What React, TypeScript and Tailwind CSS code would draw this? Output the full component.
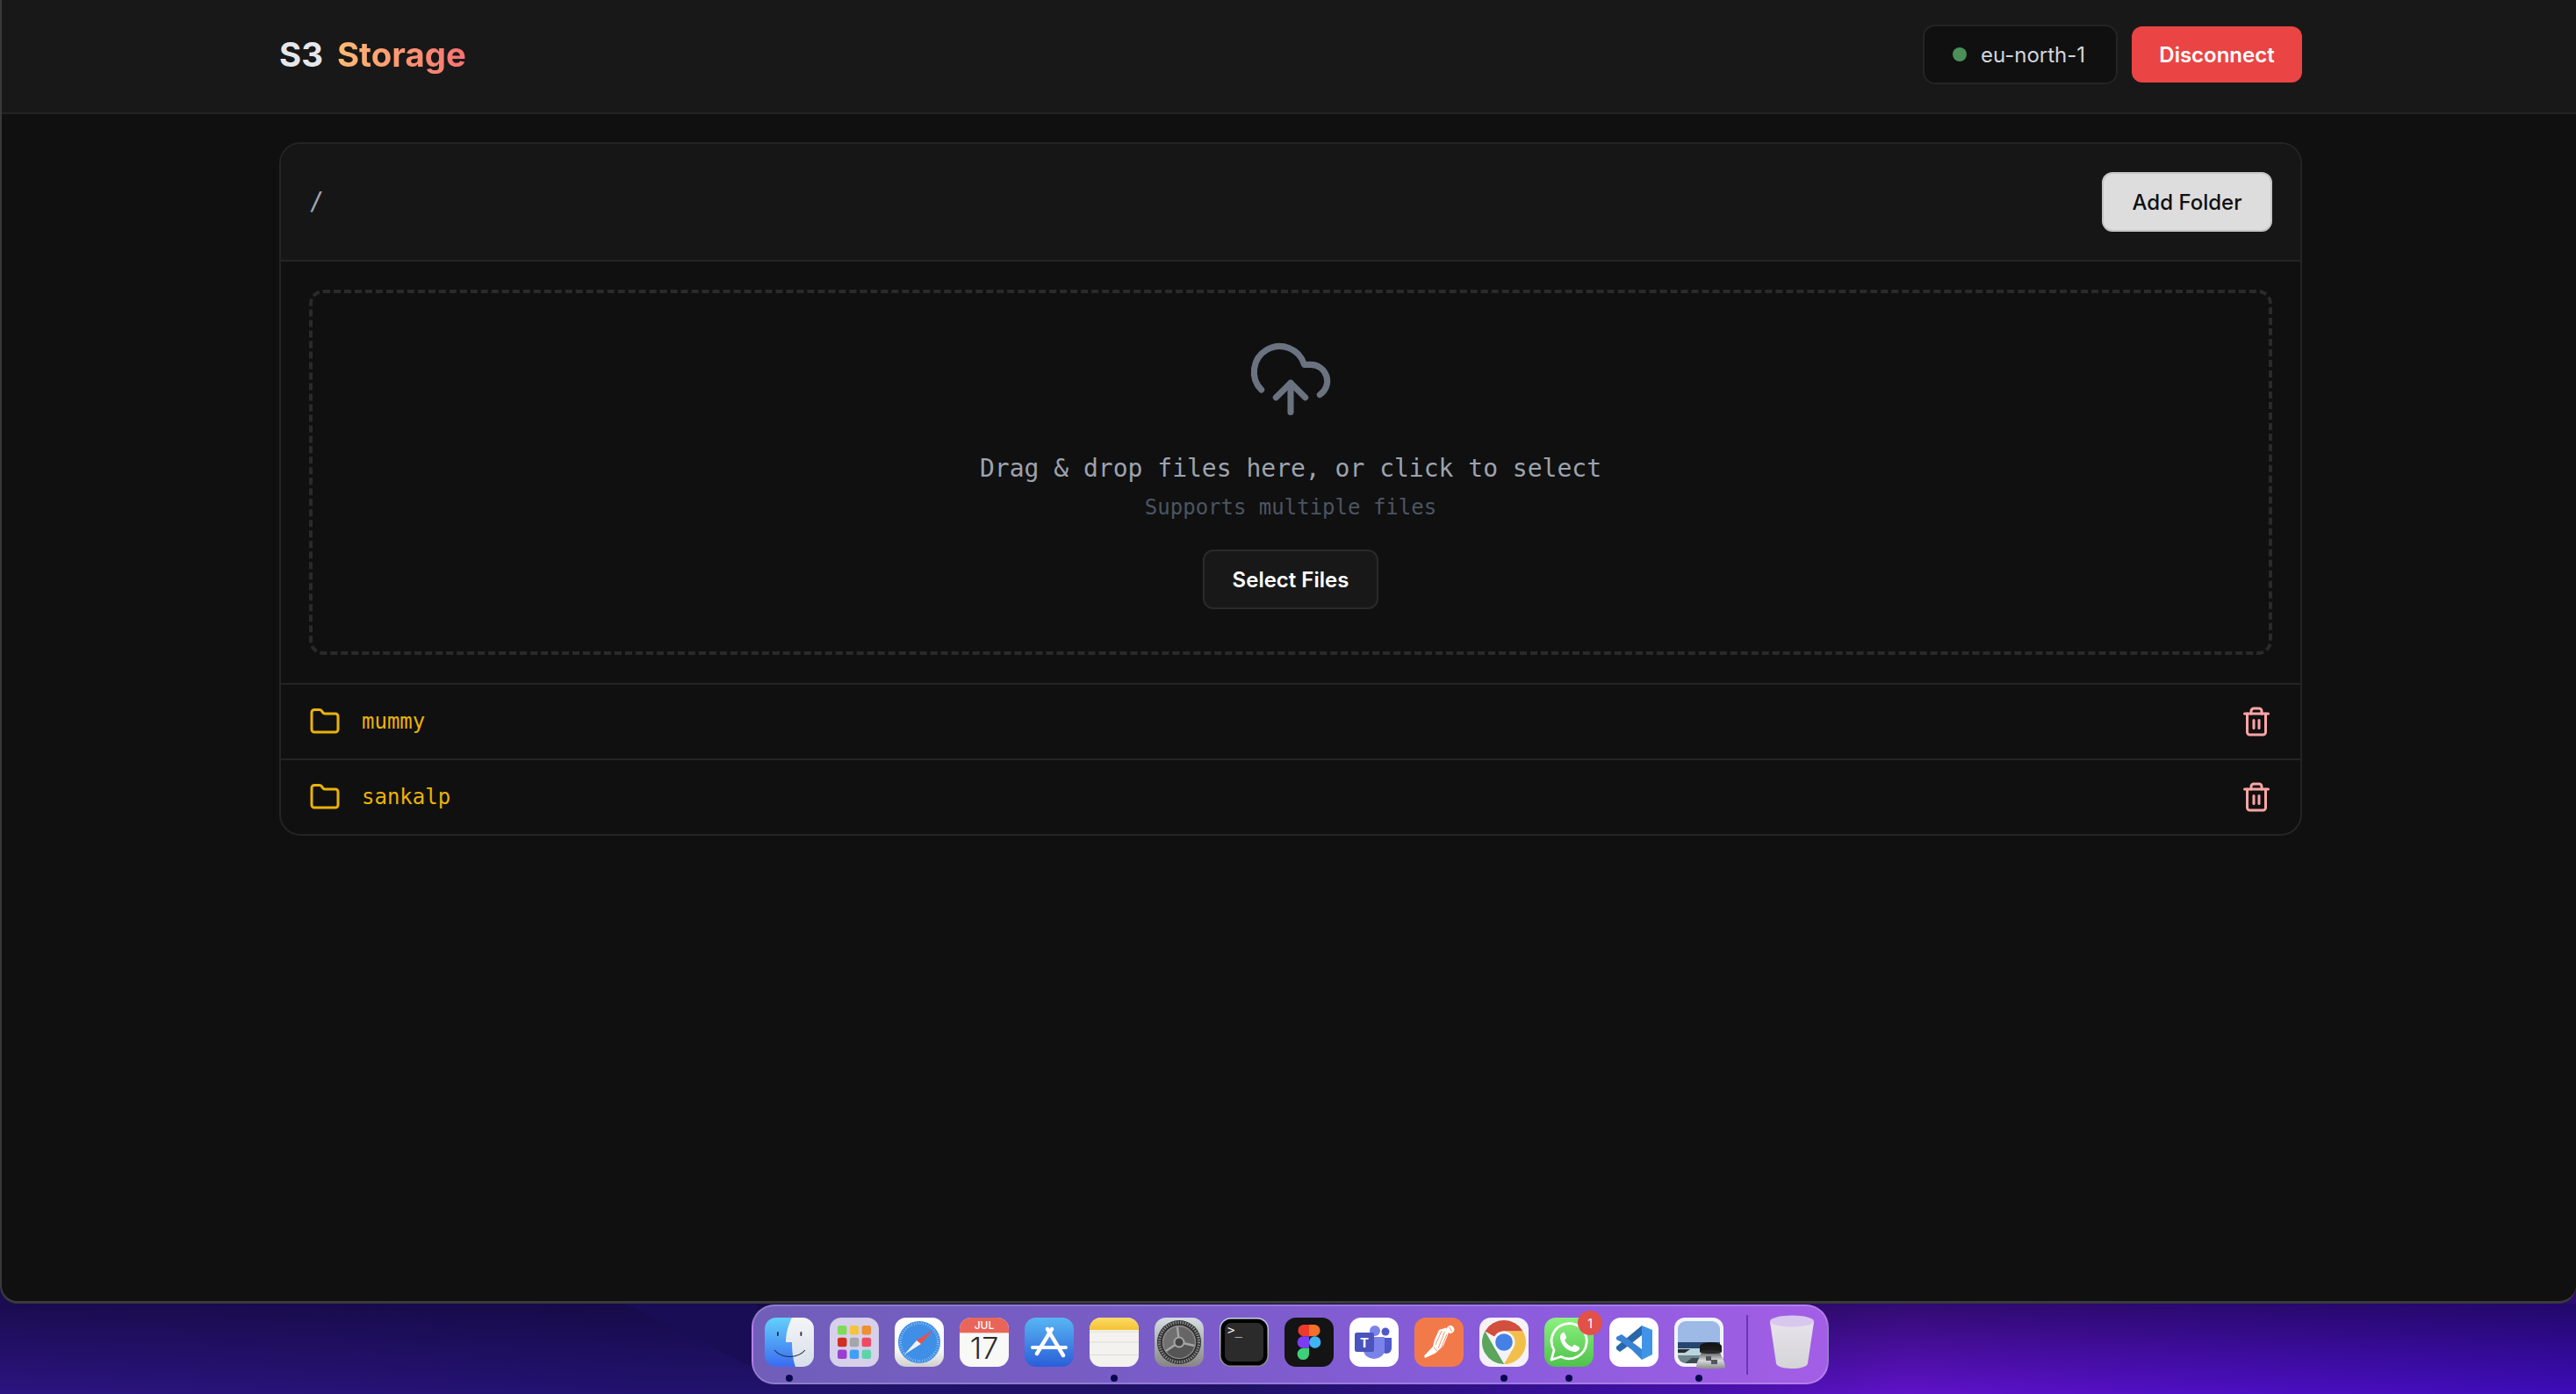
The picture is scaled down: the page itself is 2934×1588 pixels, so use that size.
import React from "react";
import { Folder, Trash2, CloudUpload } from "lucide-react";

const Finder = () => (
  <svg width="56" height="56" viewBox="0 0 56 56">
    <defs>
      <linearGradient id="fa" x1="0" y1="0" x2="0" y2="1"><stop offset="0" stopColor="#63d0fb" /><stop offset="1" stopColor="#3a6cf0" /></linearGradient>
      <linearGradient id="fb" x1="0" y1="0" x2="0" y2="1"><stop offset="0" stopColor="#f5f5f6" /><stop offset="1" stopColor="#d6dfea" /></linearGradient>
      <clipPath id="fc"><rect width="56" height="56" rx="13" /></clipPath>
    </defs>
    <g clipPath="url(#fc)">
      <rect width="56" height="56" fill="url(#fa)" />
      <path d="M31 0C27 8 24 18 24 28H31C31 38 32 48 35 56H56V0Z" fill="url(#fb)" />
    </g>
    <rect x="14" y="16" width="1.8" height="5" rx="0.9" fill="#1f2a44" />
    <rect x="40.5" y="16" width="1.8" height="5" rx="0.9" fill="#1f2a44" />
    <path d="M11 37C20 47 37 47 46 37" fill="none" stroke="#1f2a44" strokeWidth="1.1" />
  </svg>
);

const Launchpad = () => {
  const colors = ["#7fdc5a", "#f6c33e", "#ee8f30", "#cf3022", "#a3a7a8", "#ee4b63", "#9a3fd2", "#3f9ff6", "#5cd4a9"];
  return (
    <svg width="56" height="56" viewBox="0 0 56 56">
      <rect width="56" height="56" rx="13" fill="#d6d0ea" />
      {colors.map((c, i) => (
        <rect key={i} x={9 + (i % 3) * 13.8} y={9 + Math.floor(i / 3) * 13.8} width="10.5" height="10.5" rx="2.5" fill={c} />
      ))}
    </svg>
  );
};

const Safari = () => (
  <svg width="56" height="56" viewBox="0 0 56 56">
    <defs>
      <linearGradient id="sa" x1="0" y1="0" x2="0" y2="1"><stop offset="0.6" stopColor="#ffffff" /><stop offset="1" stopColor="#cfcfcf" /></linearGradient>
    </defs>
    <rect width="56" height="56" rx="13" fill="url(#sa)" />
    <circle cx="28" cy="28" r="24" fill="#3f8fe6" />
    <circle cx="28" cy="28" r="21.5" fill="none" stroke="#cfe3f8" strokeWidth="3" strokeDasharray="0.5 2.2" />
    <polygon points="44,14 25,26 30,30" fill="#ef4f42" />
    <polygon points="11,42 25,26 30,30" fill="#f2f2f2" />
  </svg>
);

const Calendar = () => (
  <svg width="56" height="56" viewBox="0 0 56 56">
    <defs><clipPath id="cc"><rect width="56" height="56" rx="13" /></clipPath></defs>
    <g clipPath="url(#cc)">
      <rect width="56" height="56" fill="#f8f8f6" />
      <rect width="56" height="17" fill="#e9655a" />
      <rect y="17" width="56" height="1" fill="#f3c6c0" />
    </g>
    <text x="28" y="13" textAnchor="middle" fontFamily="Inter, sans-serif" fontSize="12" fontWeight="500" fill="#fff">JUL</text>
    <text x="28" y="47" textAnchor="middle" fontFamily="Inter, sans-serif" fontSize="34" fontWeight="300" fill="#2a2a2a">17</text>
  </svg>
);

const AppStore = () => (
  <svg width="56" height="56" viewBox="0 0 56 56">
    <defs><linearGradient id="aa" x1="0" y1="0" x2="0" y2="1"><stop offset="0" stopColor="#58b6f3" /><stop offset="1" stopColor="#2a5ed8" /></linearGradient></defs>
    <rect width="56" height="56" rx="13" fill="url(#aa)" />
    <g stroke="#fff" strokeLinecap="round" fill="none">
      <path d="M31 13 14 41" strokeWidth="4.4" />
      <path d="M26 13 44 43" strokeWidth="4.4" />
      <path d="M9 34H47" strokeWidth="3.8" />
    </g>
  </svg>
);

const Notes = () => (
  <svg width="56" height="56" viewBox="0 0 56 56">
    <defs>
      <clipPath id="nc"><rect width="56" height="56" rx="13" /></clipPath>
      <linearGradient id="na" x1="0" y1="0" x2="0" y2="1"><stop offset="0" stopColor="#fcdc68" /><stop offset="1" stopColor="#f5c232" /></linearGradient>
    </defs>
    <g clipPath="url(#nc)">
      <rect width="56" height="56" fill="#f3f2ee" />
      <rect width="56" height="14" fill="url(#na)" />
      <path d="M0 16H56" stroke="#cfcdc6" strokeDasharray="1 1" />
      <path d="M0 28H56M0 42.5H56" stroke="#dedcd6" strokeWidth="1" />
    </g>
  </svg>
);

const SettingsIcon = () => (
  <svg width="56" height="56" viewBox="0 0 56 56">
    <defs><linearGradient id="ga" x1="0" y1="0" x2="0" y2="1"><stop offset="0" stopColor="#d5dee2" /><stop offset="1" stopColor="#868684" /></linearGradient></defs>
    <rect width="56" height="56" rx="13" fill="url(#ga)" />
    <circle cx="28" cy="28" r="25" fill="#2a2a2a" />
    <circle cx="28" cy="28" r="22.5" fill="none" stroke="#8a8a8a" strokeWidth="3.4" strokeDasharray="1.5 1.3" />
    <circle cx="28" cy="28" r="18" fill="#444" stroke="#8c8c8c" strokeWidth="2.5" />
    <path d="M28 28 26 10.5A18 18 0 0 1 45.5 32Z" fill="#666" />
    <path d="M28 28 45.5 32A18 18 0 0 1 13 38Z" fill="#555" />
    <path d="M28 28 13 38A18 18 0 0 1 26 10.5Z" fill="#707070" />
    <g stroke="#a6a6a6" strokeWidth="2.4">
      <path d="M28 28 26 10.5" />
      <path d="M28 28 45.5 32" />
      <path d="M28 28 13 38" />
    </g>
    <circle cx="28" cy="28" r="5.5" fill="#444" stroke="#a6a6a6" strokeWidth="2" />
  </svg>
);

const Terminal = () => (
  <svg width="56" height="56" viewBox="0 0 56 56">
    <defs><linearGradient id="ta" x1="0" y1="0" x2="0" y2="1"><stop offset="0" stopColor="#c8d8e8" /><stop offset="1" stopColor="#8a8a86" /></linearGradient></defs>
    <rect width="56" height="56" rx="13" fill="url(#ta)" />
    <rect x="1.5" y="1.5" width="53" height="53" rx="11.5" fill="#000" />
    <rect x="6" y="6" width="44" height="44" rx="7" fill="#2b2b2b" />
    <text x="9" y="19" fontFamily="'DejaVu Sans Mono', monospace" fontSize="14" fill="#fff">&gt;_</text>
  </svg>
);

const Figma = () => (
  <svg width="56" height="56" viewBox="0 0 56 56">
    <rect width="56" height="56" rx="13" fill="#141414" />
    <path d="M28 8H21.3a6.7 6.7 0 0 0 0 13.3H28Z" fill="#ee3a2d" />
    <path d="M28 8h6.7a6.7 6.7 0 0 1 0 13.3H28Z" fill="#f2702c" />
    <path d="M28 21.3H21.3a6.7 6.7 0 0 0 0 13.4H28Z" fill="#7b3df2" />
    <circle cx="34.7" cy="28" r="6.7" fill="#3fb4f5" />
    <path d="M21.3 34.7H28V41.4a6.7 6.7 0 1 1-6.7-6.7Z" fill="#3ecf7a" />
  </svg>
);

const Teams = () => (
  <svg width="56" height="56" viewBox="0 0 56 56">
    <rect width="56" height="56" rx="13" fill="#fff" />
    <circle cx="41" cy="16" r="4.5" fill="#5059c9" />
    <path d="M36 23H48V35a6 6 0 0 1-12 0Z" fill="#5059c9" />
    <circle cx="29" cy="15" r="6" fill="#7b83eb" />
    <path d="M16 22H40V37a12 10 0 0 1-24 0Z" fill="#7b83eb" />
    <rect x="6" y="17" width="22" height="22" rx="2.5" fill="#4b53bc" />
    <text x="17" y="33.5" textAnchor="middle" fontFamily="Inter, sans-serif" fontSize="15" fontWeight="700" fill="#fff">T</text>
  </svg>
);

const Postman = () => (
  <svg width="56" height="56" viewBox="0 0 56 56">
    <rect width="56" height="56" rx="13" fill="#f27a4a" />
    <circle cx="41" cy="13.5" r="4.4" fill="#fff" />
    <path d="M36 11.5 28 14 23 25 21 33 11 43.5 12 46 24 40.5 33 32 38 20 39 16Z" fill="#fff" />
    <path d="M31 15 24 31M34.5 16 27 35M37 19 31 33M22 34 26 38" stroke="#f27a4a" strokeWidth="0.8" fill="none" />
    <path d="M39.5 10.5 43 16" stroke="#f27a4a" strokeWidth="0.8" />
  </svg>
);

const Chrome = () => (
  <svg width="56" height="56" viewBox="0 0 56 56">
    <rect width="56" height="56" rx="13" fill="#f4f2f8" />
    <path d="M28 3A25 25 0 0 1 49.65 15.5H28A12.5 12.5 0 0 0 17 21.5L6.35 15.5A25 25 0 0 1 28 3Z" fill="#d14f3c" />
    <path d="M6.35 15.5 17 34 28.2 53A25 25 0 0 1 6.35 15.5Z" fill="#5ca55c" />
    <path d="M49.65 15.5A25 25 0 0 1 28 53L39 34 28 15.5Z" fill="#f2c04a" />
    <circle cx="28" cy="28" r="12.5" fill="#f5f5f5" />
    <circle cx="28" cy="28" r="9.8" fill="#4580e6" />
  </svg>
);

const WhatsApp = () => (
  <svg width="56" height="56" viewBox="0 0 56 56">
    <defs><linearGradient id="wa" x1="0" y1="0" x2="0" y2="1"><stop offset="0" stopColor="#8cf17f" /><stop offset="1" stopColor="#4fc24c" /></linearGradient></defs>
    <rect width="56" height="56" rx="13" fill="url(#wa)" />
    <path d="M8 48 11 37A20 20 0 1 1 19 44.5Z" fill="none" stroke="#fff" strokeWidth="2.8" strokeLinejoin="round" />
    <path d="M21 17c-2 1-3 3-3 5 0 9 9 17 17 17 2 0 4-2 5-3 .5-1 0-2-.5-2.5l-4.5-2.5c-1-.5-1.5 0-2 .5l-1.5 2c-4-1.5-7-4.5-8.5-8l1.5-1.5c.8-.8.8-1.5.5-2.2L23 17.5c-.5-1-1.2-1-2-.5Z" fill="#fff" />
  </svg>
);

const VSCode = () => (
  <svg width="56" height="56" viewBox="0 0 56 56">
    <rect width="56" height="56" rx="13" fill="#fff" />
    <path d="M37 9 49 14V42L37 48Z" fill="#4094e8" />
    <path d="M37 9V20L19 34 12 39 8 36V33L14 28ZM37 9" fill="#2a66aa" />
    <path d="M37 48V36L14 19 8 22 8 25 14 28 26 37Z" fill="#3a82d2" />
  </svg>
);

const Preview = () => (
  <svg width="56" height="56" viewBox="0 0 56 56" className="overflow-visible">
    <defs>
      <clipPath id="pc"><rect x="4" y="4" width="48" height="48" rx="9" /></clipPath>
      <linearGradient id="pb" x1="0" y1="0" x2="0" y2="1"><stop offset="0" stopColor="#555" /><stop offset="0.5" stopColor="#d8dadc" /><stop offset="1" stopColor="#888" /></linearGradient>
    </defs>
    <rect width="56" height="56" rx="12" fill="#f2f4f8" />
    <g clipPath="url(#pc)">
      <rect x="4" y="4" width="48" height="26" fill="#9db9e6" />
      <rect x="4" y="28" width="48" height="7" fill="#27466f" />
      <rect x="4" y="35" width="48" height="8" fill="#b9d6de" />
      <rect x="4" y="43" width="48" height="9" fill="#6f8590" />
      <path d="M4 36H18L12 40H4Z" fill="#2c2c30" />
      <path d="M12 52 20 46H32V52Z" fill="#3d4a52" />
    </g>
    <path d="M25 57C25 50 29 46 31 39H52C54 46 58 50 58 57Q41 60 25 57Z" fill="url(#pb)" />
    <ellipse cx="41.5" cy="33" rx="12.5" ry="5" fill="#151515" />
    <rect x="29" y="33" width="25" height="6" fill="#1a1a1a" />
    <ellipse cx="41.5" cy="39" rx="12.5" ry="2" fill="#2a2a2a" />
    <rect x="36" y="44" width="6" height="5" fill="#50565c" />
    <rect x="42" y="48" width="7" height="5" fill="#50565c" />
  </svg>
);

const TrashCan = () => (
  <svg width="50" height="62" viewBox="0 0 50 62">
    <defs><linearGradient id="tc" x1="0" y1="0" x2="0" y2="1"><stop offset="0" stopColor="#e8e4ee" /><stop offset="1" stopColor="#d4d4d6" /></linearGradient></defs>
    <path d="M0 8C1 3 49 3 50 8L43 55C42 63 8 63 7 55Z" fill="url(#tc)" />
    <ellipse cx="25" cy="7" rx="25" ry="6.5" fill="#d9c8ee" />
  </svg>
);

const apps: { icon: React.ReactNode; dot?: boolean; badge?: string }[] = [
  { icon: <Finder />, dot: true },
  { icon: <Launchpad /> },
  { icon: <Safari /> },
  { icon: <Calendar /> },
  { icon: <AppStore /> },
  { icon: <Notes />, dot: true },
  { icon: <SettingsIcon /> },
  { icon: <Terminal /> },
  { icon: <Figma /> },
  { icon: <Teams /> },
  { icon: <Postman /> },
  { icon: <Chrome />, dot: true },
  { icon: <WhatsApp />, dot: true, badge: "1" },
  { icon: <VSCode /> },
  { icon: <Preview />, dot: true },
];

function Row({ name }: { name: string }) {
  return (
    <div className="flex h-[86px] items-center justify-between border-t-2 border-[#242424] px-8">
      <div className="flex items-center gap-6">
        <Folder size={36} className="text-[#eab308]" />
        <span className="text-[24px] text-[#eab308] font-['DejaVu_Sans_Mono',monospace]">{name}</span>
      </div>
      <Trash2 size={36} className="text-[#fca5a5]" />
    </div>
  );
}

export default function App() {
  return (
    <div className="flex h-[1588px] w-full flex-col overflow-hidden bg-[linear-gradient(90deg,#1a0c50,#2c0a70)] font-['Inter',sans-serif]">
      <div className="h-[1485px] shrink-0 overflow-hidden rounded-b-[20px] border-b-[3px] border-l-2 border-[#3a3a3a] bg-[#101010]">
        <header className="flex h-[130px] items-center justify-between border-b-2 border-[#242424] bg-[#181818] pb-1 pl-[316px] pr-[312px]">
          <div className="flex items-center gap-4 text-[38.4px] font-bold leading-[48px]">
            <span className="text-[#e5e7eb]">S3</span>
            <span className="bg-gradient-to-r from-[#fdba74] to-[#f87171] bg-clip-text text-transparent">Storage</span>
          </div>
          <div className="flex items-center gap-4">
            <div className="flex h-[68px] w-[222px] items-center gap-4 rounded-[14px] border-2 border-[#242424] bg-[#101010] pl-8">
              <span className="h-4 w-4 rounded-full bg-[#4a9058]" />
              <span className="pt-0.5 text-[24px] text-[#d1d5db]">eu-north-1</span>
            </div>
            <button className="flex h-16 w-[194px] items-center justify-center rounded-xl bg-[#ea4444] pt-0.5 text-[24px] font-semibold text-white">Disconnect</button>
          </div>
        </header>
        <main className="pl-[316px] pt-8">
          <div className="w-[2304px] overflow-hidden rounded-[24px] border-2 border-[#242424]">
            <div className="flex h-[132px] items-center justify-between bg-[#161616] px-8">
              <span className="text-[28px] text-[#9ca3af] font-['DejaVu_Sans_Mono',monospace]">/</span>
              <button className="flex h-[68px] w-[194px] items-center justify-center rounded-xl border-2 border-[#c4c4c4] bg-[#dddddd] pt-0.5 text-[24px] font-medium text-[#101010]">Add Folder</button>
            </div>
            <div className="border-t-2 border-[#242424] p-8">
              <div className="flex h-[416px] flex-col items-center rounded-2xl border-4 border-dashed border-[#2a2a2a] pt-12 font-['DejaVu_Sans_Mono',monospace]">
                <CloudUpload size={100} strokeWidth={1.7} className="text-[#6b7280]" />
                <p className="mt-[30px] pt-0.5 text-[28px] leading-10 text-[#9ca3af]">Drag &amp; drop files here, or click to select</p>
                <p className="mt-1.5 text-[24px] leading-9 text-[#4b5563]">Supports multiple files</p>
                <button className="mt-[30px] flex h-[68px] w-[200px] items-center justify-center rounded-xl border-2 border-[#2a2a2a] bg-[#181818] pt-0.5 text-[24px] font-semibold text-white font-['Inter',sans-serif]">Select Files</button>
              </div>
            </div>
            <Row name="mummy" />
            <Row name="sankalp" />
          </div>
        </main>
      </div>
      <div className="relative h-[103px] shrink-0 bg-[linear-gradient(180deg,rgba(12,5,40,0.55)_0%,rgba(12,5,40,0)_100%),linear-gradient(90deg,#2c1480_0%,#22126f_25%,#1f1268_48%,#3c10a0_62%,#5f12c8_74%,#4f0fc4_85%,#3d0cb8_100%)]">
        <div className="absolute left-[712px] top-0 h-[75px] w-[150px] bg-[#190e55] [clip-path:polygon(0_0,100%_0,100%_100%)]" />
        <div className="relative ml-[856px] mt-px flex h-[91px] w-[1227px] rounded-[26px] border-2 border-white/20 bg-[linear-gradient(90deg,#705eb9_0%,#7a5cc8_40%,#8a5cdc_70%,#a35ee6_100%)] pl-[13px] pt-[13px]">
          <div className="flex gap-[18px]">
            {apps.map((a, i) => (
              <div key={i} className="relative h-[56px] w-[56px]">
                {a.icon}
                {a.badge && (
                  <span className="absolute -right-[10px] -top-[8px] flex h-7 w-7 items-center justify-center rounded-full bg-[#e2504a] text-[14px] text-white">{a.badge}</span>
                )}
                {a.dot && <span className="absolute left-1/2 top-[65px] h-2 w-2 -translate-x-1/2 rounded-full bg-[#08084e]" />}
              </div>
            ))}
          </div>
          <div className="ml-[26px] mt-[-3px] h-[68px] w-0.5 bg-[#6a35b8]" />
          <div className="ml-[25px] mt-[-3px]"><TrashCan /></div>
        </div>
      </div>
    </div>
  );
}
